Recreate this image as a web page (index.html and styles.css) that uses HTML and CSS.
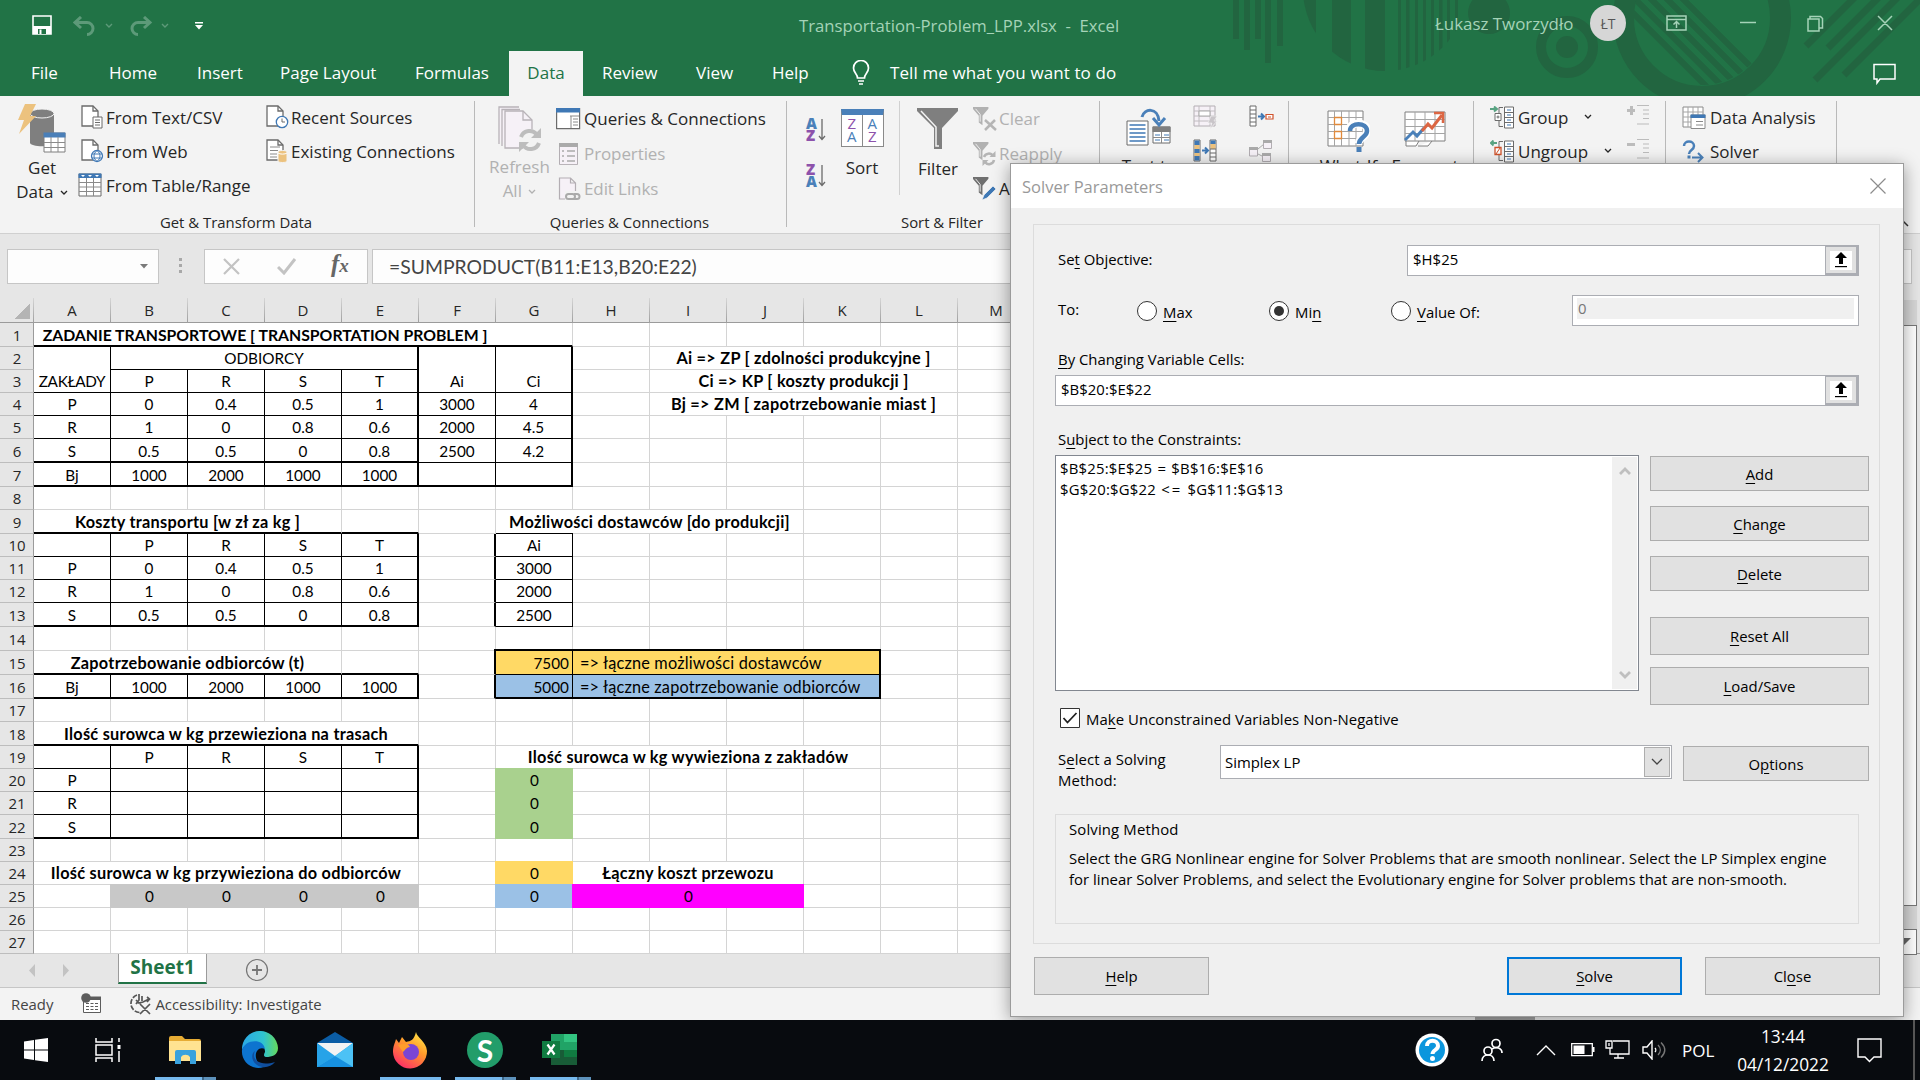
FILE: index.html
```html
<!DOCTYPE html>
<html lang="en">
<head>
<meta charset="utf-8">
<title>Transportation-Problem_LPP.xlsx - Excel</title>
<link rel="stylesheet" href="styles.css">
</head>
<body>
<svg class="defs" width="0" height="0">
  <defs>
    <symbol id="page" viewBox="0 0 24 24"><path d="M1 1h11l5 5v15H1z" fill="#fff" stroke="#6b6b6b" stroke-width="1.3"/><path d="M12 1v5h5" fill="none" stroke="#6b6b6b" stroke-width="1.3"/></symbol>
    <symbol id="chev" viewBox="0 0 8 6"><path d="M1 1l3 3 3-3" fill="none" stroke="currentColor" stroke-width="1.3"/></symbol>
    <symbol id="refpick" viewBox="0 0 22 19"><path fill="#fff" d="M0 0h22v19H0z"/><path d="M11 1l6 6h-4v6H9V7H5z" /><path d="M5 15h12v1.2H5z"/></symbol>
    <symbol id="funnel" viewBox="0 0 20 24"><path d="M0 0h17v2l-6.500 7.500V20l-4-3V9.500L0 2z" fill="currentColor"/><path d="M3 2l5 6v8" fill="none" stroke="#f3f3f3"/></symbol>
  </defs>
</svg>

<div class="window">
<header class="titlebar">
  <svg class="decor" width="720" height="96" viewBox="1200 0 720 96">
    <defs>
      <clipPath id="c1"><circle cx="1385" cy="-11" r="82"/></clipPath>
      <clipPath id="c2"><circle cx="1702" cy="17" r="68"/></clipPath>
    </defs>
    <g fill="#226540">
      <path d="M1233 0h6v39h-6zM1244 0h6v50h-6zM1255 0h6v39h-6zM1265 0h6v63h-6zM1277 0h6v46h-6z"/>
      <path clip-path="url(#c1)" d="M1300 0h16v80h-16zM1332 0h19v80h-19zM1365 0h20v80h-20zM1398 0h3v80h-3zM1406 0h3.500v80h-3.500zM1415 0h3v80h-3zM1423 0h3v80h-3zM1431 0h3v80h-3zM1439 0h3.500v80h-3.500zM1447 0h3v80h-3zM1455 0h3v80h-3z"/>
      <circle cx="1489" cy="13" r="21"/>
      <circle cx="1567" cy="47" r="11"/>
    </g>
    <g fill="none" stroke="#226540">
      <circle cx="1567" cy="47" r="26" stroke-width="10"/>
      <circle cx="1702" cy="18" r="78.500" stroke-width="21"/>
      <path clip-path="url(#c2)" stroke-width="6" d="M1600-20l130 130M1616-20l130 130M1632-20l130 130M1648-20l130 130M1664-20l130 130"/>
      <path stroke-width="7" d="M1806 46l50-50M1828 48l52-52M1815 80l84-84M1844 75l79-79"/>
    </g>
  </svg>
  <div class="titlerow">
    <svg class="save" width="20" height="20" viewBox="0 0 20 20"><path d="M1 1h18v18H1z" fill="none" stroke="#fff" stroke-width="1.600"/><path d="M1 11h18v8H1z" fill="#fff"/><path d="M6 14h8v5H6z" fill="#217346"/><path d="M7.500 14.500h2V19h-2z" fill="#fff"/></svg>
    <svg class="undo" width="44" height="20" viewBox="0 0 44 20"><path d="M8 1L2 6.500 8 12M2 6.500h12a6 6 0 0 1 0 12" fill="none" stroke="#5d9a79" stroke-width="3"/><path d="M33 8l3 3 3-3" fill="none" stroke="#5d9a79" stroke-width="1.400"/></svg>
    <svg class="redo" width="44" height="20" viewBox="0 0 44 20"><path d="M15 1l6 5.500-6 5.500M21 6.500H9a6 6 0 0 0 0 12" fill="none" stroke="#5d9a79" stroke-width="3"/><path d="M33 8l3 3 3-3" fill="none" stroke="#5d9a79" stroke-width="1.400"/></svg>
    <svg class="qat" width="8" height="8" viewBox="0 0 8 8"><path d="M0 0h8v1.500H0zM0 3h8L4 7.500z" fill="#fff"/></svg>
    <span class="doc">Transportation-Problem_LPP.xlsx&nbsp; -&nbsp; Excel</span>
    <span class="user">Łukasz Tworzydło</span>
    <span class="avatar">ŁT</span>
    <svg class="wbtns" width="230" height="20" viewBox="0 0 230 20" fill="none" stroke="#a5d3b8" stroke-width="1.500"><path d="M1 3h19v14H1zM1 6.500h19M10.500 15V9M7.500 11.500l3-3 3 3M74 9.500h16M142 6h11v12h-11zM144 6V3.500h10.500l2 2V15H153M212 3l14 14M226 3l-14 14"/></svg>
  </div>
  <nav class="tabs">
    <span class="t-file">File</span><span class="t-home">Home</span><span class="t-ins">Insert</span><span class="t-page">Page Layout</span><span class="t-form">Formulas</span><span class="t-data">Data</span><span class="t-rev">Review</span><span class="t-view">View</span><span class="t-help">Help</span>
    <svg class="bulb" width="18" height="26" viewBox="0 0 18 26" fill="none" stroke="#fff" stroke-width="1.700"><path d="M5.500 18c0-4-4-5-4-10a7.500 7.500 0 0 1 15 0c0 5-4 6-4 10zM6 21h6M7 24h4"/></svg>
    <span class="tell">Tell me what you want to do</span>
    <svg class="comment" width="24" height="22" viewBox="0 0 24 22" fill="none" stroke="#fff" stroke-width="1.500"><path d="M1 1.500h21V16H7l-3 4v-4H1z"/></svg>
  </nav>
</header>

<section class="ribbon">
  <div class="group g-get">
    <div class="tools">
      <div class="big get">
        <svg width="48" height="49" viewBox="0 0 48 49"><path d="M12 9.500v29c0 5 24 5 24 0v-29" fill="#7f7f7f"/><ellipse cx="24" cy="9.500" rx="12" ry="4.500" fill="#7f7f7f" stroke="#f3f3f3"/><path d="M7 0h11l-6 12h6L1 30l5-14H0z" fill="#ecc27e"/><path d="M26 29h21v19H26z" fill="#fff" stroke="#7f7f7f"/><path d="M25.500 28.500h22v5h-22z" fill="#4a7fb8"/><path d="M26 38.500h21M26 43.500h21M33 33v15M40 33v15" stroke="#8a8a8a"/></svg>
        <span>Get</span><span>Data <svg class="chev" width="8" height="6"><use href="#chev"/></svg></span>
      </div>
      <div class="rows r34">
        <div><svg width="24" height="24" viewBox="0 0 24 24"><use href="#page" width="24" height="24"/><path d="M12 12h9v11h-9z" fill="#fff" stroke="#6b6b6b"/><path d="M14 15h5M14 17.500h5M14 20h5" stroke="#6b6b6b"/></svg><span>From Text/CSV</span></div>
        <div><svg width="24" height="24" viewBox="0 0 24 24"><use href="#page" width="24" height="24"/><circle cx="16" cy="17" r="5.500" fill="#fff" stroke="#3f78b5" stroke-width="1.300"/><path d="M11 15h10M11 19h10M16 11.500c-4 3-4 8 0 11c4-3 4-8 0-11z" fill="none" stroke="#3f78b5"/></svg><span>From Web</span></div>
        <div class="wide"><svg width="25" height="24" viewBox="0 0 25 24"><path d="M1 1h22v22H1z" fill="#fff" stroke="#6b6b6b"/><path d="M.5.500h23V5H.5z" fill="#3f78b5"/><path d="M3 2h4L5 4zM10 2h4l-2 2zM17 2h4l-2 2z" fill="#fff"/><path d="M1 9.500h22M1 14h22M1 18.500h22M8.500 5v18M15.500 5v18" stroke="#8a8a8a"/></svg><span>From Table/Range</span></div>
      </div>
      <div class="rows r34 second">
        <div><svg width="24" height="24" viewBox="0 0 24 24"><use href="#page" width="24" height="24"/><circle cx="16" cy="17" r="5.700" fill="#fff" stroke="#3f78b5" stroke-width="1.300"/><path d="M16 13.500V17h3" fill="none" stroke="#6b6b6b"/></svg><span>Recent Sources</span></div>
        <div><svg width="24" height="24" viewBox="0 0 24 24"><use href="#page" width="24" height="24"/><path d="M4 8h10M4 11.500h8M4 15h7M4 18h7" stroke="#8a8a8a"/><path d="M12 13c0-2 9-2 9 0v9c0 2-9 2-9 0z" fill="#ecc27e" stroke="#f3f3f3"/><path d="M12 14c2 1.500 7 1.500 9 0" fill="none" stroke="#fff"/></svg><span>Existing Connections</span></div>
      </div>
    </div>
    <div class="glabel">Get &amp; Transform Data</div>
  </div>

  <div class="group g-query">
    <div class="tools">
      <div class="big refresh off">
        <svg width="44" height="46" viewBox="0 0 44 46" fill="#f6f1f7" stroke="#b8b3b8" stroke-width="1.300"><path d="M1 38V1h20M4 40V3.500h18"/><path d="M7 5h18l9 9v28H7z"/><path d="M25 5v9h9" fill="none"/><circle cx="32" cy="34" r="11" fill="#f3f3f3" stroke="none"/><path d="M23 31a9 9 0 0 1 16-2M41 37a9 9 0 0 1-16 2" fill="none" stroke="#bdbdbd" stroke-width="4"/><path d="M43 22v10H33zM21 46V36h10z" fill="#bdbdbd" stroke="none"/></svg>
        <span>Refresh</span><span>All <svg class="chev" width="8" height="6"><use href="#chev"/></svg></span>
      </div>
      <div class="rows r35">
        <div><svg width="25" height="22" viewBox="0 0 25 22"><path d="M.6.600h23v20H.6z" fill="#fff" stroke="#6b6b6b" stroke-width="1.200"/><path d="M0 0h24v4.500H0z" fill="#3f78b5"/><path d="M14 8h9M15 8v12" stroke="#8a8a8a"/><path d="M17 11h5M17 14h5M17 17h5" stroke="#8a8a8a"/></svg><span>Queries &amp; Connections</span></div>
        <div class="off"><svg width="25" height="22" viewBox="0 0 25 22"><path d="M3.500.600h18v21h-18z" fill="#f6f1f7" stroke="#b3aeb3"/><path d="M3 0h19v4H3z" fill="#aaa"/><path d="M6 8h2M6 13h2M6 18h2M11 8h8M11 13h8M11 18h8" stroke="#aaa" stroke-width="1.500"/></svg><span>Properties</span></div>
        <div class="off"><svg width="25" height="24" viewBox="0 0 25 24"><path d="M3.500 1h11l5 5v16h-16zM14.500 1v5h5" fill="#f6f1f7" stroke="#b3aeb3" stroke-width="1.200"/><path d="M9 14h16v10H9z" fill="#f3f3f3"/><path d="M12.500 17h4a2.500 2.500 0 0 1 0 5h-4a2.500 2.500 0 0 1 0-5M18 17h3a2.500 2.500 0 0 1 0 5h-4" fill="none" stroke="#aaa" stroke-width="2"/></svg><span>Edit Links</span></div>
      </div>
    </div>
    <div class="glabel">Queries &amp; Connections</div>
  </div>

  <div class="group g-sort">
    <div class="tools">
      <div class="azcol">
        <div class="az"><span><b class="bl">A</b><b class="pu">Z</b></span><svg width="8" height="24" viewBox="0 0 8 24"><path d="M4 1v20M1 18l3 3.500L7 18" fill="none" stroke="#6b6b6b" stroke-width="1.300"/></svg></div>
        <div class="az"><span><b class="pu">Z</b><b class="bl">A</b></span><svg width="8" height="24" viewBox="0 0 8 24"><path d="M4 1v20M1 18l3 3.500L7 18" fill="none" stroke="#6b6b6b" stroke-width="1.300"/></svg></div>
      </div>
      <div class="big sort">
        <div class="sorticon"><i class="pu">Z</i><i class="bl">A</i><i class="bl">A</i><i class="pu">Z</i></div>
        <span>Sort</span>
      </div>
      <div class="big filter">
        <svg width="42" height="42" viewBox="0 0 42 42"><path d="M0 0h41v3L25 20v21h-8V20L0 3z" fill="#7f7f7f"/><path d="M4 3l15 16v19h3" fill="none" stroke="#f3f3f3" stroke-width="1.500"/></svg>
        <span>Filter</span>
      </div>
      <div class="rows r35 filt">
        <div class="off"><svg width="24" height="24" viewBox="0 0 24 24"><use href="#funnel" width="20" height="22" x="-1" y="0"/><path d="M12 13l11 10M22 13L12 23" stroke="#b5b5b5" stroke-width="2.500"/></svg><span>Clear</span></div>
        <div class="off"><svg width="24" height="24" viewBox="0 0 24 24"><use href="#funnel" width="20" height="22" x="-1" y="0"/><path d="M11 15a5 5 0 0 1 9-1M21 18a5 5 0 0 1-9 2" stroke="#b5b5b5" stroke-width="2.500" fill="none"/><path d="M22.500 9v6h-6zM9.500 24v-6h6z" fill="#b5b5b5"/></svg><span>Reapply</span></div>
        <div class="adv"><svg width="24" height="24" viewBox="0 0 24 24"><use href="#funnel" width="20" height="22" x="-1" y="0"/><path d="M9 23l2-5 9-9 3 3-9 9z" fill="#3f78b5" stroke="#f3f3f3" stroke-width=".7"/></svg><span>Advanced</span></div>
      </div>
    </div>
    <div class="glabel">Sort &amp; Filter</div>
  </div>

  <div class="group g-tools">
    <div class="tools">
      <div class="big t2c">
        <svg width="46" height="38" viewBox="0 0 46 38"><path d="M1 13h21v24H1z" fill="#fff" stroke="#6b6b6b"/><path d="M3.500 17h16M3.500 21h16M3.500 25h16M3.500 29h16M3.500 33h16" stroke="#3f78b5" stroke-width="1.300"/><path d="M27 19h17v16H27z" fill="#fff" stroke="#6b6b6b"/><path d="M26.500 18.500h18V24h-18z" fill="#7f7f7f"/><path d="M35.500 24v11M27 29.500h17" stroke="#8a8a8a"/><path d="M29 27h5M38 27h5M29 32h5M38 32h5" stroke="#3f78b5"/><path d="M16 9C18 0 32-1 33 13" fill="none" stroke="#4a80b9" stroke-width="3"/><path d="M27 10l6 7 6-7" fill="none" stroke="#4a80b9" stroke-width="3"/></svg>
        <span>Text to</span>
      </div>
      <div class="icongrid">
        <svg width="26" height="24" viewBox="0 0 26 24"><path d="M1 1h21v20H1z" fill="#f6f1f7" stroke="#b3aeb3"/><path d="M1 6h21M1 11h21M1 16h21M6 1v20M17 1v20" stroke="#c0bcc0"/><path d="M6 6h11v5H6z" fill="#fff" stroke="#aaa"/><path d="M18 11h6l-3 5h3l-7 8 2-6h-4z" fill="#c9c5c9" stroke="#f3f3f3" stroke-width=".6"/></svg>
        <svg width="26" height="24" viewBox="0 0 26 24"><path d="M1 1h6v20H1zM1 5h6M1 9h6M1 13h6M1 17h6" fill="#fff" stroke="#6b6b6b"/><path d="M9 11.500h5M12 8.500l3 3-3 3" fill="none" stroke="#3f78b5" stroke-width="2"/><path d="M17 9.500h7v4.500h-7z" fill="#fff" stroke="#d0532c" stroke-width="1.200"/><path d="M19 12h3" stroke="#d0532c"/></svg>
        <svg width="26" height="24" viewBox="0 0 26 24"><path d="M1 1h6v21H1zM17 1h6v21h-6z" fill="#fff" stroke="#6b6b6b"/><path d="M1.500 1.500h5V6h-5zM1.500 10h5v4h-5zM1.500 17h5v4.500h-5zM17.500 1.500h5V5h-5z" fill="#3f78b5"/><path d="M1.500 6h5v4h-5zM1.500 14h5v3h-5zM17.500 5h5v5h-5z" fill="#ecc27e"/><path d="M17 10h6M17 14h6M17 18h6" stroke="#6b6b6b"/><path d="M9 11.500h5M12 8.500l3 3-3 3" fill="none" stroke="#3f78b5" stroke-width="2"/></svg>
        <svg width="26" height="24" viewBox="0 0 26 24"><path d="M9 10l6-5M9 15l6 3" stroke="#aaa"/><path d="M.5 9h8v8h-8zM14.500 1.500h8v8h-8zM13.500 14.500h8v8h-8z" fill="#f6f1f7" stroke="#b3aeb3"/><path d="M0 8h9v3H0zM14 1h9v3h-9zM13 14h9v3h-9z" fill="#aaa"/></svg>
      </div>
    </div>
  </div>

  <div class="group g-fore">
    <div class="tools">
      <div class="big whatif">
        <svg width="43" height="42" viewBox="0 0 43 42"><path d="M1 1h35v35H1z" fill="#fff" stroke="#7f7f7f"/><path d="M1 7.500h35M1 14.500h35M1 21.500h35M1 28.500h35M7.500 1v35M14.500 1v35M22 1v35M29 1v35" stroke="#a5a5a5"/><path d="M7.500 7.500h7v7h-7zM7.500 21.500h7v7h-7z" fill="#fff" stroke="#e08a3c" stroke-width="1.300"/><path d="M22 21c0-10 19-10 18 0c0 6-8 6-8 12" fill="none" stroke="#fff" stroke-width="8"/><path d="M23 21c0-9 17-9 17 0c0 6-8 6-8 13" fill="none" stroke="#4a80b9" stroke-width="4.500"/><path d="M29.500 37h5v5h-5z" fill="#4a80b9"/></svg>
        <span>What-If</span>
      </div>
      <div class="big forecast">
        <svg width="42" height="36" viewBox="0 0 42 36"><path d="M1 1h40v29H1zM2 30v5h10l3-5M14 35h10l4-5" fill="#fff" stroke="#7f7f7f"/><path d="M1 8.500h40M1 15.500h40M1 22.500h40M11 1v29M21 1v29M31 1v29" stroke="#a5a5a5"/><path d="M1 29l8-8 4 4 7-8" fill="none" stroke="#4a80b9" stroke-width="3"/><path d="M18 20l6-7 4 4L38 4" fill="none" stroke="#dc6643" stroke-width="3"/><path d="M30 2h9v10" fill="none" stroke="#dc6643" stroke-width="2.500"/></svg>
        <span>Forecast</span>
      </div>
    </div>
  </div>

  <div class="group g-outline">
    <div class="tools">
      <div class="rows r34">
        <div><svg width="25" height="23" viewBox="0 0 25 23"><path d="M0 3h6M4 .500l3 2.500-3 2.500" fill="none" stroke="#58a382" stroke-width="2"/><path d="M13 1.500h-4v19h4" fill="none" stroke="#6b6b6b"/><path d="M5 7.500h6v7H5z" fill="#fff" stroke="#6b6b6b"/><path d="M6.500 11h3M8 9.500v3" stroke="#6b6b6b"/><path d="M14.500 1h9v21h-9zM14.500 6.500h9M14.500 11.500h9M14.500 16.500h9" fill="#fff" stroke="#6b6b6b"/><path d="M17 4h4M17 9h4M17 14h4M17 19h4" stroke="#3f78b5"/></svg><span>Group</span><svg class="chev cg" width="8" height="6"><use href="#chev"/></svg></div>
        <div><svg width="25" height="23" viewBox="0 0 25 23"><path d="M1 3h6M3.500.500L.8 3l2.700 2.500" fill="none" stroke="#58a382" stroke-width="2"/><path d="M13 1.500h-4v19h4" fill="none" stroke="#6b6b6b"/><path d="M5 7.500h6v7H5z" fill="#fff" stroke="#d0532c" stroke-width="1.300"/><path d="M6 14l4-6" stroke="#d0532c"/><path d="M14.500 1h9v21h-9zM14.500 6.500h9M14.500 11.500h9M14.500 16.500h9" fill="#fff" stroke="#6b6b6b"/><path d="M17 4h4M17 9h4M17 14h4M17 19h4" stroke="#3f78b5"/></svg><span>Ungroup</span><svg class="chev cu" width="8" height="6"><use href="#chev"/></svg></div>
      </div>
      <div class="rows r34 detail">
        <div><svg width="23" height="20" viewBox="0 0 23 20" stroke="#bcbcbc"><path d="M0 5.500h8M4.500 1v9" stroke-width="3"/><path d="M10 .500h12M16 5h6M16 9h6M16 13.500h6M10 19h12" stroke-width="1.200"/></svg></div>
        <div><svg width="23" height="20" viewBox="0 0 23 20" stroke="#bcbcbc"><path d="M0 5.500h8" stroke-width="3"/><path d="M10 .500h12M16 5h6M16 9h6M16 13.500h6M10 19h12" stroke-width="1.200"/></svg></div>
      </div>
    </div>
  </div>

  <div class="group g-an">
    <div class="tools">
      <div class="rows r34">
        <div><svg width="25" height="23" viewBox="0 0 25 23"><path d="M1 1h20v20H1z" fill="#fff" stroke="#8a8a8a"/><path d="M1 6h20M1 11h20M1 16h20M6 1v20M11 1v20M16 1v20" stroke="#a5a5a5"/><path d="M9 9h14v13.500H9z" fill="#fff" stroke="#8a8a8a"/><path d="M8.500 8.500h15V12h-15z" fill="#3f78b5"/><path d="M14 15.500h7M14 19h7" stroke="#8a8a8a"/></svg><span>Data Analysis</span></div>
        <div><svg width="25" height="23" viewBox="0 0 25 23"><path d="M2 6c0-6 10-6 10 0c0 4-5 4-5 8" fill="none" stroke="#4a80b9" stroke-width="2.500"/><path d="M5.500 15.500h3v3h-3z" fill="#4a80b9"/><path d="M10 17.500h9M16 13l4.500 4.500L16 22" fill="none" stroke="#4a80b9" stroke-width="2"/></svg><span>Solver</span></div>
      </div>
    </div>
  </div>
  <svg class="collapse" width="10" height="7" viewBox="0 0 10 7"><path d="M1 6l4-4 4 4" fill="none" stroke="#333" stroke-width="1.500"/></svg>
</section>

<section class="formulabar">
  <div class="namebox"><svg width="8" height="5" viewBox="0 0 8 5"><path d="M0 0h8L4 4.500z" fill="#7a7a7a"/></svg></div>
  <div class="dots"><i></i><i></i><i></i></div>
  <div class="fxbox">
    <svg width="18" height="17" viewBox="0 0 18 17"><path d="M1 1l15 15M16 1L1 16" stroke="#c3c3c3" stroke-width="2.200"/></svg>
    <svg width="20" height="17" viewBox="0 0 20 17"><path d="M1 9l6 6L18 1" fill="none" stroke="#c3c3c3" stroke-width="3"/></svg>
    <span class="fx">f<small>x</small></span>
  </div>
  <div class="formula">=SUMPRODUCT(B11:E13,B20:E22)</div>
</section>

<section class="sheet">
  <div class="heads"><span class="corner"></span><span>A</span><span>B</span><span>C</span><span>D</span><span>E</span><span>F</span><span>G</span><span>H</span><span>I</span><span>J</span><span>K</span><span>L</span><span>M</span></div>
  <div class="row tall"><b class="n">1</b><div class="c s6 bold caps B">ZADANIE TRANSPORTOWE [ TRANSPORTATION PROBLEM ]</div><div class="c B gr"></div></div>
  <div class="row"><b class="n">2</b><div class="c r"></div><div class="c s4 b R">ODBIORCY</div><div class="c r"></div><div class="c R"></div><div class="c s4 at9 bold gl">Ai =&gt; ZP [ zdolności produkcyjne ]</div></div>
  <div class="row"><b class="n">3</b><div class="c r b zak">ZAKŁADY</div><div class="c r b">P</div><div class="c r b">R</div><div class="c r b">S</div><div class="c R b">T</div><div class="c r b">Ai</div><div class="c R b">Ci</div><div class="c s4 at9 bold gl">Ci =&gt; KP [ koszty produkcji ]</div></div>
  <div class="row"><b class="n">4</b><div class="c r b">P</div><div class="c r b">0</div><div class="c r b">0.4</div><div class="c r b">0.5</div><div class="c R b">1</div><div class="c r b">3000</div><div class="c R b">4</div><div class="c s4 at9 bold gl">Bj =&gt; ZM [ zapotrzebowanie miast ]</div></div>
  <div class="row"><b class="n">5</b><div class="c r b">R</div><div class="c r b">1</div><div class="c r b">0</div><div class="c r b">0.8</div><div class="c R b">0.6</div><div class="c r b">2000</div><div class="c R b">4.5</div></div>
  <div class="row tall"><b class="n">6</b><div class="c r B">S</div><div class="c r B">0.5</div><div class="c r B">0.5</div><div class="c r B">0</div><div class="c R B">0.8</div><div class="c r b">2500</div><div class="c R b">4.2</div></div>
  <div class="row tall"><b class="n">7</b><div class="c r B">Bj</div><div class="c r B">1000</div><div class="c r B">2000</div><div class="c r B">1000</div><div class="c R B">1000</div><div class="c r B"></div><div class="c R B"></div></div>
  <div class="row"><b class="n">8</b></div>
  <div class="row tall"><b class="n">9</b><div class="c s4 bold B gr">Koszty transportu [w zł za kg ]</div><div class="c B gr"></div><div class="c s4 at7 bold gr gl g9">Możliwości dostawców [do produkcji]</div></div>
  <div class="row"><b class="n">10</b><div class="c r b"></div><div class="c r b">P</div><div class="c r b">R</div><div class="c r b">S</div><div class="c R b">T</div><div class="c R gl"></div><div class="c r b">Ai</div></div>
  <div class="row"><b class="n">11</b><div class="c r b">P</div><div class="c r b">0</div><div class="c r b">0.4</div><div class="c r b">0.5</div><div class="c R b">1</div><div class="c R gl"></div><div class="c r b">3000</div></div>
  <div class="row"><b class="n">12</b><div class="c r b">R</div><div class="c r b">1</div><div class="c r b">0</div><div class="c r b">0.8</div><div class="c R b">0.6</div><div class="c R gl"></div><div class="c r b">2000</div></div>
  <div class="row tall"><b class="n">13</b><div class="c r B">S</div><div class="c r B">0.5</div><div class="c r B">0.5</div><div class="c r B">0</div><div class="c R B">0.8</div><div class="c R gl"></div><div class="c r b">2500</div></div>
  <div class="row tall"><b class="n">14</b><div class="lead at7 s5"></div></div>
  <div class="row tall"><b class="n">15</b><div class="c s4 bold B gr">Zapotrzebowanie odbiorców (t)</div><div class="c B gr"></div><div class="c R gl"></div><div class="c r b right yel">7500</div><div class="c s4 R b left yel">=&gt; łączne możliwości dostawców</div></div>
  <div class="row tall"><b class="n">16</b><div class="c r B">Bj</div><div class="c r B">1000</div><div class="c r B">2000</div><div class="c r B">1000</div><div class="c R B">1000</div><div class="c R gl"></div><div class="c r B right blu">5000</div><div class="c s4 R B left blu">=&gt; łączne zapotrzebowanie odbiorców</div></div>
  <div class="row"><b class="n">17</b></div>
  <div class="row tall"><b class="n">18</b><div class="c s5 bold B gr">Ilość surowca w kg przewieziona na trasach</div></div>
  <div class="row"><b class="n">19</b><div class="c r b"></div><div class="c r b">P</div><div class="c r b">R</div><div class="c r b">S</div><div class="c R b">T</div><div class="c s5 at7 bold gr gl">Ilość surowca w kg wywieziona z zakładów</div></div>
  <div class="row"><b class="n">20</b><div class="c r b">P</div><div class="c r b"></div><div class="c r b"></div><div class="c r b"></div><div class="c R b"></div><div class="fill grn at7">0</div></div>
  <div class="row"><b class="n">21</b><div class="c r b">R</div><div class="c r b"></div><div class="c r b"></div><div class="c r b"></div><div class="c R b"></div><div class="fill grn at7">0</div></div>
  <div class="row tall"><b class="n">22</b><div class="c r B">S</div><div class="c r B"></div><div class="c r B"></div><div class="c r B"></div><div class="c R B"></div><div class="fill grn at7">0</div></div>
  <div class="row"><b class="n">23</b></div>
  <div class="row"><b class="n">24</b><div class="c s5 bold gr gl">Ilość surowca w kg przywieziona do odbiorców</div><div class="fill yel at7">0</div><div class="c s3 bold gr gl">Łączny koszt przewozu</div></div>
  <div class="row"><b class="n">25</b><div class="fill gry at2">0</div><div class="fill gry">0</div><div class="fill gry">0</div><div class="fill gry">0</div><div class="fill blu at7">0</div><div class="fill mag s3">0</div></div>
  <div class="row"><b class="n">26</b></div>
  <div class="row"><b class="n">27</b></div>
  <div class="vscroll"><i class="up"><svg width="14" height="8" viewBox="0 0 14 8"><path d="M0 7l7-7 7 7z" fill="#666"/></svg></i><i class="thumb"></i><i class="track"></i><i class="down"><svg width="14" height="8" viewBox="0 0 14 8"><path d="M0 0l7 7 7-7z" fill="#666"/></svg></i></div>
</section>

<footer class="sheetbar">
  <svg width="44" height="14" viewBox="0 0 44 14"><path d="M7 0v13L1 6.500zM35 0v13l6-6.500z" fill="#c3c3c3"/></svg>
  <span class="tab">Sheet1</span>
  <svg class="plus" width="24" height="24" viewBox="0 0 24 24" fill="none" stroke="#767676"><circle cx="12" cy="12" r="10.500" stroke-width="1.200"/><path d="M7 12h10M12 7v10" stroke-width="1.800"/></svg>
</footer>
<footer class="status">
  <span>Ready</span>
  <svg class="rec" width="21" height="21" viewBox="0 0 21 21"><path d="M2.500 5h17v14.500h-17z" fill="#fff" stroke="#5c5c5c"/><path d="M9 3.500h11V7H9z" fill="#5c5c5c"/><path d="M5 10.500h12M5 13.500h12M5 16.500h12" stroke="#5c5c5c" stroke-dasharray="3 1.500"/><circle cx="5" cy="5" r="4.800" fill="#5c5c5c"/></svg>
  <svg class="acc" width="22" height="22" viewBox="0 0 22 22" fill="none" stroke="#555" stroke-width="1.700"><path d="M7 2a9 9 0 0 0 3 17.500" stroke-dasharray="5 1.500"/><path d="M9 1v6l-3 4M6 7l3 3 4-1 6-3M12 3v5M17 4l2.500 2-2.500 3M10 11l10 10M20 11L10 21"/></svg>
  <span>Accessibility: Investigate</span>
  <i class="zoombit"></i>
</footer>

<section class="dialog">
  <div class="dtitle"><span>Solver Parameters</span><svg width="16" height="16" viewBox="0 0 16 16"><path d="M.5.500l15 15M15.500.500l-15 15" stroke="#8c8c8c" stroke-width="1.200"/></svg></div>
  <div class="panel">
    <div class="f obj"><label>Se<u>t</u> Objective:</label><div class="input">$H$25<span class="pick"><svg width="22" height="19"><use href="#refpick"/></svg></span></div></div>
    <div class="f to"><label>To:</label>
      <span class="radio ra"><i></i><em><u>M</u>ax</em></span><span class="radio rb on"><i></i><em>Mi<u>n</u></em></span><span class="radio rc"><i></i><em><u>V</u>alue Of:</em></span>
      <div class="input dis"><span>0</span></div></div>
    <div class="lab"><u>B</u>y Changing Variable Cells:</div>
    <div class="input">$B$20:$E$22<span class="pick"><svg width="22" height="19"><use href="#refpick"/></svg></span></div>
    <div class="lab">S<u>u</u>bject to the Constraints:</div>
    <div class="cons">
      <div class="list"><div class="items">$B$25:$E$25 = $B$16:$E$16<br>$G$20:$G$22 <span class="op">&lt;=</span> $G$11:$G$13</div>
        <div class="sb"><svg width="12" height="10" viewBox="0 0 12 10"><path d="M1 8l5-5 5 5" fill="none" stroke="#bfbfbf" stroke-width="2.800"/></svg><svg width="12" height="10" viewBox="0 0 12 10"><path d="M1 2l5 5 5-5" fill="none" stroke="#bfbfbf" stroke-width="2.800"/></svg></div></div>
      <div class="btns"><span class="btn"><u>A</u>dd</span><span class="btn b2"><u>C</u>hange</span><span class="btn b3"><u>D</u>elete</span><span class="btn b4"><u>R</u>eset All</span><span class="btn b5"><u>L</u>oad/Save</span></div>
    </div>
    <div class="check"><svg width="20" height="20" viewBox="0 0 20 20"><path d="M.5.500h19v19H.5z" fill="#fff" stroke="#333"/><path d="M3.500 10l4 4.500L16.500 5" fill="none" stroke="#222" stroke-width="1.800"/></svg><span>Ma<u>k</u>e Unconstrained Variables Non-Negative</span></div>
    <div class="method"><label>S<u>e</u>lect a Solving<br>Method:</label><div class="select"><span>Simplex LP</span><i><svg width="12" height="8" viewBox="0 0 12 8"><path d="M1 1l5 5 5-5" fill="none" stroke="#444" stroke-width="1.300"/></svg></i></div><span class="btn opt">O<u>p</u>tions</span></div>
    <div class="desc"><p>Solving Method</p><p class="d2">Select the GRG Nonlinear engine for Solver Problems that are smooth nonlinear. Select the LP Simplex engine<br>for linear Solver Problems, and select the Evolutionary engine for Solver problems that are non-smooth.</p></div>
  </div>
  <div class="dfoot"><span class="btn"><u>H</u>elp</span><span class="btn solve"><u>S</u>olve</span><span class="btn close">Cl<u>o</u>se</span></div>
</section>
</div>

<div class="taskbar">
  <span class="slot start"><svg width="26" height="26" viewBox="0 0 26 26"><path d="M1 4.500L11 3v9.500H1zM12 2.800L25 1v11.500H12zM1 13.500h10V23L1 21.500zM12 13.500h13V25l-13-1.800z" fill="#fff"/></svg></span>
  <span class="slot tview"><svg width="26" height="26" viewBox="0 0 26 26" fill="none" stroke="#fff" stroke-width="1.500"><path d="M1 1v4h16V1M1 25v-4h16v4M1 8h16v10H1zM24 1v4M24 14v11"/><path d="M22.500 8h3v4h-3z" fill="#fff" stroke="none"/></svg></span>
  <span class="slot app run two"><svg width="34" height="30" viewBox="0 0 34 30"><path d="M1 3a2 2 0 0 1 2-2h11l3 3h14a2 2 0 0 1 2 2v5H1z" fill="#e6ac34"/><path d="M1 6h32v20H1z" fill="#ffe391"/><path d="M7 29V17a2 2 0 0 1 2-2h17a2 2 0 0 1 2 2v12h-6v-7a5 4 0 0 0-9 0v7z" fill="#3aa2dd"/></svg></span>
  <span class="slot app"><svg width="38" height="38" viewBox="0 0 38 38"><defs><linearGradient id="e1" x1="0" x2="1"><stop offset="0" stop-color="#2aa8e6"/><stop offset=".6" stop-color="#30c3cf"/><stop offset="1" stop-color="#66d95a"/></linearGradient></defs><path d="M1 19A18 18 0 0 1 37 17c0 7-6 9-12 9-3-1-2-3-1-5 1-9-17-14-23-2z" fill="url(#e1)"/><path d="M1 19C3 9 22 6 24 18c-10-4-14 12-1 18C10 40 0 30 1 19z" fill="#0d74cf"/><path d="M14 20c-4 8 4 16 20 11-4 5-12 7-18 3-6-4-6-12-2-14z" fill="#104f9e"/></svg></span>
  <span class="slot app"><svg width="38" height="36" viewBox="0 0 38 36"><path d="M1 11L19 0l18 11v6H1z" fill="#0b5da5"/><path d="M1 11h36L19 27z" fill="#f3f3f3"/><path d="M1 11v24h36V11L19 24z" fill="#27a3e8"/><path d="M19 24l18-13v24H1z" fill="#4cc2f5"/><path d="M19 24l18 11H1z" fill="#1791e0"/></svg></span>
  <span class="slot app run"><svg width="36" height="38" viewBox="0 0 36 38"><defs><linearGradient id="ff" x1=".9" y1="0" x2=".3" y2="1"><stop offset="0" stop-color="#fff04a"/><stop offset=".45" stop-color="#ff9a2b"/><stop offset="1" stop-color="#ff2f66"/></linearGradient></defs><path d="M24 1c1 6 10 9 11 19a17 17 0 0 1-34 1C1 15 3 12 4 8l3 4 3-6 4 5c5-1 8-2 10-10z" fill="url(#ff)"/><circle cx="19" cy="21" r="8" fill="#7a45d6"/><path d="M6 14c4-1 10-2 12 2-3 0-5 3-7 5z" fill="#ff9d2a"/></svg></span>
  <span class="slot app run two"><span class="slogo">S</span></span>
  <span class="slot app run two"><svg width="36" height="34" viewBox="0 0 36 34"><path d="M9 1h26v31H9z" fill="#21a366"/><path d="M22 1h13v8H22z" fill="#33c481"/><path d="M9 17h13v15H9z" fill="#185c37"/><path d="M22 17h13v7H22z" fill="#107c41"/><path d="M22 24h13v8H9v-8z" fill="#185c37"/><path d="M0 8h18v17H0z" fill="#107c41"/><path d="M5.500 11.500l7 10M12.500 11.500l-7 10" stroke="#fff" stroke-width="2.200"/></svg></span>
  <div class="tray">
    <svg width="34" height="34" viewBox="0 0 34 34"><circle cx="17" cy="17" r="16.500" fill="#fff"/><circle cx="17" cy="17" r="13" fill="#0b96dd"/><path d="M12 13c0-7 11-7 11 0c0 4-5.500 4-5.500 8" fill="none" stroke="#fff" stroke-width="4"/><circle cx="17.500" cy="25.500" r="2.500" fill="#fff"/></svg>
    <svg class="people" width="24" height="24" viewBox="0 0 24 24" fill="none" stroke="#fff" stroke-width="1.700"><circle cx="8" cy="13" r="4"/><circle cx="16" cy="5.500" r="4"/><path d="M2 23c0-8 12-8 12 0M12 11c4-3 10-1 10 4"/></svg>
    <svg class="up" width="20" height="11" viewBox="0 0 20 11"><path d="M1 10l9-9 9 9" fill="none" stroke="#fff" stroke-width="1.400"/></svg>
    <svg class="bat" width="24" height="14" viewBox="0 0 24 14"><path d="M.7.700h20.600v12H.7z" fill="none" stroke="#fff" stroke-width="1.300"/><path d="M2.500 2.500h11v8.500h-11zM22 4h1.500v5H22z" fill="#fff"/></svg>
    <svg class="net" width="26" height="20" viewBox="0 0 26 20" fill="none" stroke="#fff" stroke-width="1.300"><path d="M8 1h16v13H5V8M1 1h6v7H1zM4 3v3M13 14v4M9 18h10"/></svg>
    <svg class="snd" width="24" height="20" viewBox="0 0 24 20" fill="none" stroke="#fff" stroke-width="1.400"><path d="M1 7h4l5-6v18l-5-6H1zM13 8c1 1 1 3 0 4"/><path d="M16 5c3 3 3 7 0 10M19 2.500c5 5 5 10 0 15" stroke="#777"/></svg>
    <span class="lang">POL</span>
    <span class="clock">13:44<br>04/12/2022</span>
    <svg class="note" width="25" height="25" viewBox="0 0 25 25" fill="none" stroke="#fff" stroke-width="1.400"><path d="M1 1h23v18h-7l-4.500 4.500L8 19H1z"/></svg>
  </div>
</div>
</body>
</html>
```
FILE: styles.css
```css
* { box-sizing: border-box; }
body { margin: 0; width: 1920px; height: 1080px; overflow: hidden; font-family: "Open Sans", "Noto Sans", sans-serif; font-size: 17px; color: #262626; background: #080c10; white-space: nowrap; }
svg { display: block; flex: none; }
.defs { position: absolute; }
.window { position: relative; height: 1020px; background: #e6e6e6; overflow: hidden; }

/* title bar */
.titlebar { position: relative; height: 96px; background: #217346; color: #fff; }
.decor { position: absolute; right: 0; top: 0; }
.titlerow { position: relative; display: flex; align-items: center; height: 51px; padding-left: 32px; }
.save { margin-top: -2px; }
.undo { margin-left: 21px; }
.redo { margin-left: 12px; }
.qat { margin-left: 22px; }
.doc { margin-left: 596px; width: 600px; color: #a5d3b8; font-size: 16.700px; }
.user { margin-left: 36px; width: 140px; color: #a5d3b8; margin-top: -4px; font-size: 16.900px; }
.avatar { margin-left: 15px; margin-top: -5px; width: 36px; height: 36px; border-radius: 50%; background: #d6d6d6; color: #555; display: grid; place-items: center; font-size: 14px; }
.wbtns { margin-left: 40px; margin-top: -5px; }
.tabs { position: relative; display: flex; align-items: stretch; height: 45px; line-height: 43px; }
.tabs span { flex: none; }
.t-file { margin-left: 31px; width: 78px; }
.t-home { width: 88px; }
.t-ins { width: 83px; }
.t-page { width: 135px; }
.t-form { width: 94px; }
.t-data { width: 74px; background: #f3f3f3; color: #217346; text-align: center; }
.t-rev { margin-left: 19px; width: 94px; }
.t-view { width: 76px; }
.t-help { width: 80px; }
.bulb { margin-top: 9px; }
.tell { margin-left: 20px; width: 983px; letter-spacing: .1px; }
.comment { margin-top: 12px; }

/* ribbon */
.ribbon { position: relative; display: flex; height: 138px; background: #f3f3f3; border-bottom: 1px solid #d0d0d0; padding-top: 5px; }
.group { height: 126px; border-right: 1px solid #b9b9b9; display: flex; flex-direction: column; }
.tools { display: flex; height: 111px; flex: none; }
.glabel { text-align: center; font-size: 14.900px; line-height: 20px; height: 20px; flex: none; }
.off { color: #b1b1b1; }
.big { display: flex; flex-direction: column; align-items: center; line-height: 24px; flex: none; }
.chev { display: inline-block; vertical-align: middle; }
.rows > div { display: flex; align-items: center; }
.rows.r34 > div { height: 34px; }
.rows.r34 { margin-top: -1px; }
.rows.r35 > div { height: 35px; }
.rows svg + span { margin-left: 2px; }
.g-get { width: 475px; }
.get { width: 80px; padding: 3px 0 0 4px; }
.get span { margin-top: 2px; line-height: 22px; margin-left: 0; }
.get span:nth-of-type(1) { margin-top: 4px; }
.get .chev, .refresh .chev { margin-left: 2px; }
.g-get .rows { width: 185px; padding-left: 1px; }
.g-get .rows svg + span { margin-left: 1px; }
.g-get .rows .wide { margin-left: -3px; }
.g-get .rows .wide svg + span { margin-left: 3px; }
.g-get .glabel { margin-left: -2px; }
.g-query { width: 312px; }
.refresh { width: 81px; padding: 5px 0 0 8px; }
.refresh span { line-height: 22px; margin-top: 2px; }
.refresh span:nth-of-type(1) { margin-top: 4px; }
.g-query .glabel { margin-left: -2px; }
.g-query .rows svg + span { margin-left: 3px; }
.g-query .rows .off span { letter-spacing: -.1px; }
.g-sort { width: 313px; }
.g-sort .glabel { margin-left: -2px; }
.azcol { padding: 16px 0 0 19px; width: 53px; }
.az { display: flex; height: 46px; }
.az span { display: flex; flex-direction: column; width: 12px; font: 700 15px/12px "Open Sans"; }
.az b { height: 12px; }
.az svg { margin-top: 1px; }
.bl { color: #4a80b9; }
.pu { color: #8d52ab; }
.sort { width: 44px; padding-top: 8px; }
.sorticon { width: 43px; height: 38px; border: 1px solid #8a8a8a; border-top: 6px solid #4a80b9; background: linear-gradient(90deg, #fff 20px, #8a8a8a 20px, #8a8a8a 21px, #fff 21px); display: grid; grid-template-columns: 1fr 1fr; grid-template-rows: 13px 13px; padding-top: 2px; }
.sorticon i { font: 500 15px/13px "Open Sans"; text-align: center; }
.sort span, .filter span { margin-top: 9px; }
.filter { margin-left: 15px; width: 77px; padding-top: 7px; border-left: 1px solid #d0d0d0; height: 94px; }
.filter span { margin: 7px 0 0 0; }
.filt { margin-left: -3px; }
.filt .adv { color: #262626; }
.filt .adv use { color: #6f6f6f; }
.g-tools { width: 189px; }
.t2c { width: 92px; padding: 7px 0 0 6px; }
.t2c span { margin-top: 8px; }
.icongrid { display: grid; grid-template-columns: 56px 26px; grid-template-rows: 34px 34px; padding-top: 4px; margin-left: 1px; }
.g-fore { width: 185px; }
.whatif { width: 119px; padding-top: 9px; }
.whatif span { margin-top: 2px; }
.forecast { width: 34px; padding-top: 10px; }
.forecast span { margin-top: 7px; }
.g-outline { width: 192px; padding-left: 16px; }
.g-outline .rows:first-child { width: 137px; }
.g-outline .rows svg + span, .g-an .rows svg + span { margin-left: 3px; }
.cg, .cu { margin-left: 16px; }
.detail svg { margin-top: -5px; }
.g-an { width: 171px; padding-left: 16px; }
.collapse { position: absolute; right: 11px; bottom: 6px; }

/* formula bar */
.formulabar { display: flex; height: 64px; padding: 15px 8px 0 7px; }
.namebox, .fxbox, .formula { height: 35px; background: #fdfdfd; border: 1px solid #c6c6c6; }
.namebox { width: 152px; display: flex; align-items: center; justify-content: flex-end; padding-right: 10px; }
.dots { width: 43px; display: flex; flex-direction: column; align-items: center; gap: 3px; padding-top: 9px; height: 35px; margin-right: 2px; }
.dots i { width: 3px; height: 3px; background: #a8a8a8; }
.fxbox { width: 164px; display: flex; align-items: center; padding-left: 18px; }
.fxbox svg:nth-child(2) { margin-left: 36px; }
.fx { font: italic 700 25px/30px "Liberation Serif", serif; color: #666; margin-left: 34px; margin-top: -3px; }
.fx small { font-size: 19px; }
.formula { margin-left: 4px; flex: 1; padding-left: 16px; font: 19.350px/33px Lato, sans-serif; color: #444; }

/* worksheet */
.sheet { position: relative; height: 655px; width: 1917px; background: #e6e6e6; font-family: Lato, sans-serif; font-size: 15.300px; color: #000; }
.heads { display: grid; grid-template-columns: 34px repeat(13, 77px); height: 25px; width: 1035px; border-bottom: 1px solid #9b9b9b; color: #262626; line-height: 25px; text-align: center; font-family: "Open Sans"; font-size: 15px; }
.heads span { border-right: 1px solid; border-image: linear-gradient(#d8d8d8, #9b9b9b) 1; }
.corner { background: linear-gradient(135deg, transparent 50%, #b4b4b4 50%) 14px 5px / 16px 16px no-repeat; }
.row { display: grid; grid-template-columns: 34px repeat(13, 77px); grid-template-rows: 100%; height: 23px; width: 1035px; line-height: 23px; text-align: center; background: linear-gradient(#d4d4d4, #d4d4d4) 0 100% / 100% 1px no-repeat, repeating-linear-gradient(90deg, transparent 0 76px, #d4d4d4 76px 77px) 34px 0 no-repeat, #fff; }
.row.tall { height: 24px; line-height: 25px; }
.n { background: #e6e6e6; border-right: 1px solid #9b9b9b; border-bottom: 1px solid #bdbdbd; font-weight: 400; font-family: "Open Sans"; font-size: 15px; color: #262626; padding-left: 1px; }
.c { background: #fff; border: 0 solid #000; min-width: 0; }
.r { border-right-width: 1px; }
.R { border-right-width: 2px; }
.b { border-bottom-width: 1px; }
.B { border-bottom-width: 2px; }
.gr { border-right: 1px solid #d4d4d4; }
.gl:not(.b):not(.B) { border-bottom: 1px solid #d4d4d4; }
.s3 { grid-column-end: span 3; }
.s4 { grid-column-end: span 4; }
.s5 { grid-column-end: span 5; }
.s6 { grid-column-end: span 6; }
.at2 { grid-column-start: 3; }
.at7 { grid-column-start: 8; }
.at9 { grid-column-start: 10; border-right: 1px solid #d4d4d4; }
.g9 { background: linear-gradient(#000, #000) 0 100% / 77px 1px no-repeat, linear-gradient(#d4d4d4, #d4d4d4) 0 100% / 100% 1px no-repeat, #fff; }
.row > .g9.gl { border-bottom: 0; }
.bold { font-weight: 700; font-size: 16.300px; letter-spacing: .27px; line-height: 22px; }
.tall .bold { line-height: 24px; }
.bold.caps { font-size: 15.800px; letter-spacing: 0; }
.zak { letter-spacing: -.3px; }
.right { text-align: right; padding-right: 3px; }
.left { text-align: left; padding-left: 7px; font-size: 16.300px; letter-spacing: .18px; line-height: 24px; }
.lead { border-bottom: 2px solid #000; margin-left: -2px; }
.fill { margin: -1px 0 0 -1px; padding: 1px 0 0 1px; position: relative; }
.yel { background: #ffd965; }
.blu { background: #9bc1e6; }
.grn { background: #a9d18e; }
.gry { background: #c8c8c8; }
.mag { background: #f0f; }
.vscroll { position: absolute; right: 0; top: 2px; width: 26px; height: 655px; display: flex; flex-direction: column; background: #d6d6d6; }
.vscroll i { border: 1px solid #777; background: #fff; height: 26px; display: grid; place-items: center; }
.vscroll .thumb { height: 581px; margin-top: -1px; }
.vscroll .track { flex: 1; border: 0; background: #d6d6d6; }

/* bottom bars */
.sheetbar { display: flex; height: 34px; border-top: 1px solid #9b9b9b; padding-left: 28px; background: #e6e6e6; }
.sheetbar > svg:first-child { margin-top: 10px; }
.tab { margin: -1px 0 0 46px; width: 89px; height: 31px; background: #fff; border: 1px solid #9b9b9b; border-top: 0; border-bottom: 2px solid #217346; color: #217346; font-weight: 700; font-size: 19px; line-height: 29px; text-align: center; }
.plus { margin: 4px 0 0 38px; }
.status { position: relative; display: flex; align-items: center; height: 33px; background: #f3f3f3; border-top: 1px solid #c6c6c6; padding: 0 0 1px 11px; font-size: 14.900px; color: #444; }
.rec { margin-left: 28px; }
.acc { margin-left: 28px; margin-right: 3px; }
.zoombit { position: absolute; left: 1475px; bottom: 0; width: 60px; height: 4px; background: #a5a5a5; }

/* dialog */
.dialog { position: absolute; left: 1010px; top: 163px; width: 894px; height: 854px; background: #f0f0f0; border: 1px solid #9b9b9b; box-shadow: 0 3px 16px rgba(0,0,0,.38); font-size: 14.900px; color: #000; }
.dtitle { display: flex; justify-content: space-between; height: 44px; background: #fff; color: #999; font-size: 16.500px; line-height: 45px; padding: 0 17px 0 11px; }
.dtitle svg { margin-top: 14px; }
.panel { margin: 16px 0 0 22px; width: 847px; height: 720px; border: 1px solid #dcdcdc; padding: 20px 20px 0 21px; }
u { text-underline-offset: 3px; text-decoration-thickness: 1px; }
.f { display: flex; height: 31px; line-height: 29px; }
.f label { padding-left: 3px; }
.obj .input { width: 452px; margin-left: auto; }
.input { height: 31px; background: #fff; border: 1px solid #abadb3; padding-left: 5px; line-height: 27px; display: flex; justify-content: space-between; letter-spacing: .05px; }
.pick { width: 33px; border: 2px solid #abadb3; border-width: 1px 2px 2px 1px; background: #e1e1e1; display: grid; place-items: center; }
.to { margin-top: 19px; line-height: 28px; }
.radio { display: flex; align-items: center; width: 132px; }
.radio i { width: 20px; height: 20px; border-radius: 50%; border: 1.500px solid #333; background: #fff; display: grid; place-items: center; flex: none; }
.radio.on i::after { content: ""; width: 10px; height: 10px; border-radius: 50%; background: #333; }
.radio em { font-style: normal; margin: 2px 0 0 6px; }
.f .ra { margin-left: 56px; }
.to label { width: 26px; }
.radio.rb { width: 122px; }
.to .input.dis { width: 287px; margin-left: auto; padding: 2px 4px 6px; color: #777; line-height: 21px; }
.dis span { background: #f0f0f0; flex: 1; padding-left: 1px; }
.lab { margin: 23px 0 6px 3px; height: 20px; line-height: 20px; }
.cons { display: grid; grid-template-columns: 584px 219px; gap: 11px; height: 250px; margin-right: -10px; }
.list { height: 236px; border: 1px solid #828790; background: #fff; display: flex; justify-content: space-between; padding: 1px; }
.items { line-height: 21px; padding: 1px 0 0 3px; letter-spacing: .2px; word-spacing: 1.200px; }
.op { letter-spacing: 2px; }
.sb { width: 25px; background: #f0f0f0; display: flex; flex-direction: column; justify-content: space-between; align-items: center; padding: 9px 0 9px; }
.btn { display: grid; grid-auto-flow: column; place-content: center; background: #e1e1e1; border: 1px solid #adadad; height: 35px; align-items: center; line-height: 20px; white-space: pre; }
.btns { padding-top: 1px; }
.b2 { margin-top: 15px; }
.b3 { margin-top: 15px; }
.btn.b4 { margin-top: 26px; height: 38px; }
.btn.b5 { margin-top: 12px; height: 38px; }
.check { display: flex; margin: 3px 0 0 5px; height: 20px; align-items: center; }
.check span { margin-left: 6px; margin-top: 1px; letter-spacing: .06px; }
.method { display: flex; margin: 17px -10px 0 3px; height: 48px; }
.method label { width: 162px; line-height: 21px; padding-top: 4px; letter-spacing: .08px; }
.select { width: 452px; height: 34px; background: #fff; border: 1px solid #abadb3; display: flex; justify-content: space-between; padding: 1px; line-height: 31px; }
.select span { padding-left: 3px; }
.select i { width: 26px; background: #e1e1e1; border: 1px solid #adadad; display: grid; place-items: center; }
.opt { width: 186px; margin: 1px 0 0 11px; }
.desc { margin-top: 21px; height: 110px; border: 1px solid #dcdcdc; padding: 4px 0 0 13px; }
.desc p { margin: 0; line-height: 21px; }
.desc p:first-child { letter-spacing: .15px; }
.desc .d2 { margin-top: 8px; }
.dfoot { display: flex; padding: 13px 0 0 23px; }
.dfoot .btn { width: 175px; height: 38px; }
.dfoot .solve { margin-left: 298px; border: 2px solid #0078d7; }
.dfoot .close { margin-left: 23px; }

/* taskbar */
.taskbar { display: flex; height: 60px; background: #080b0f; color: #fff; }
.slot { display: grid; place-items: center; flex: none; }
.start { width: 72px; }
.tview { width: 76px; padding-right: 4px; }
.app { width: 61px; margin: 0 7px; height: 60px; }
.app > * { margin-left: -1px; }
.run { background: linear-gradient(#76b9ed, #76b9ed) 0 100% / 100% 3px no-repeat; }
.two { background: linear-gradient(90deg, #76b9ed 47px, #3f6787 47px 49px, #5d92bb 49px) 0 100% / 100% 3px no-repeat; }
.slogo { width: 36px; height: 36px; border-radius: 50%; background: #229d6a; display: grid; place-items: center; font: 700 30px/36px Lato, sans-serif; }
.tray { flex: 1; display: flex; align-items: center; padding-left: 817px; border-right: 2px solid #555; margin-right: 5px; }
.people { margin-left: 31px; }
.up { margin-left: 32px; }
.bat { margin-left: 15px; }
.net { margin-left: 10px; }
.snd { margin-left: 11px; }
.lang { margin-left: 16px; width: 38px; font-size: 17px; }
.clock { width: 116px; margin: 2px 0 0 5px; text-align: center; font-size: 17.300px; line-height: 28px; }
.note { margin-left: 16px; }
```
